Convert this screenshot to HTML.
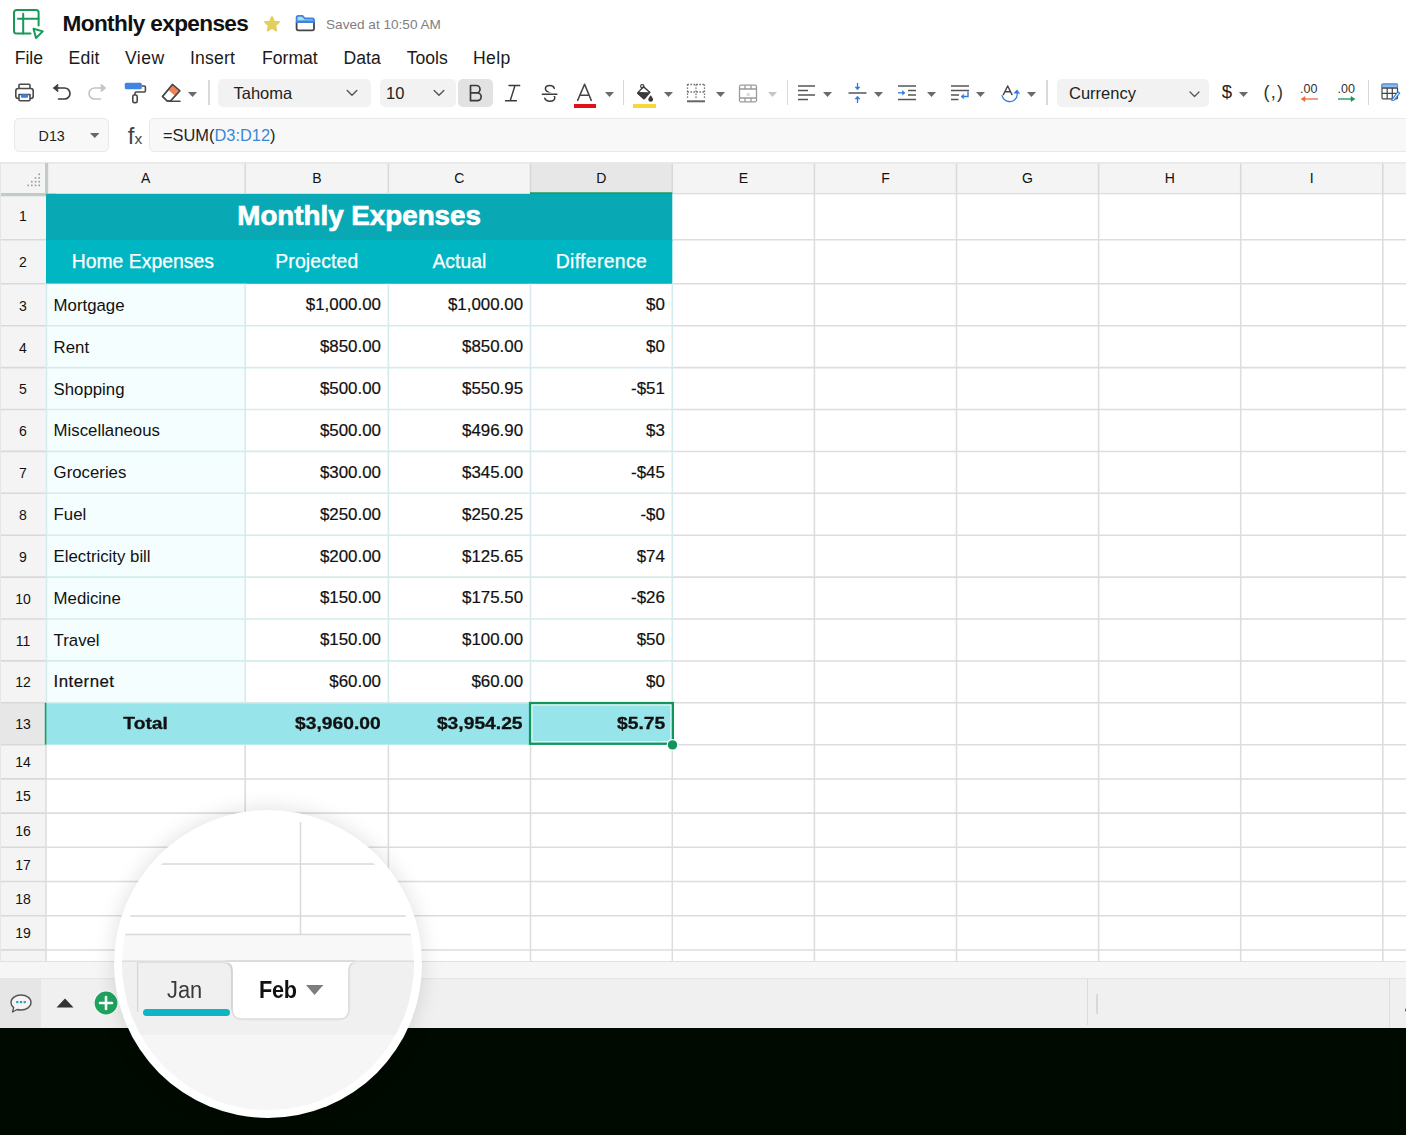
<!DOCTYPE html>
<html><head><meta charset="utf-8"><title>Monthly expenses</title>
<style>
html,body{margin:0;padding:0;}
body{width:1406px;height:1135px;overflow:hidden;background:#fff;position:relative;font-family:"Liberation Sans", sans-serif;color:#111;}
.abs{position:absolute;}
.t{position:absolute;white-space:pre;line-height:1;}
.menu{font-size:17.600px;color:#1a1a1a;top:49.800px;}
.ch{font-size:14px;color:#111;top:170.800px;text-align:center;}
.rh{font-size:14px;color:#111;left:0;width:46px;text-align:center;}
.cell{font-size:16px;color:#111;}
.num{text-align:right;}
</style></head><body>

<svg class="abs" style="left:12px;top:7px" width="34" height="34" viewBox="0 0 34 34" fill="none" stroke="#179a58" stroke-width="2" stroke-linecap="round" stroke-linejoin="round">
<path d="M18.500 26.600H4.500a2.500 2.500 0 0 1-2.500-2.500V5.400a2.500 2.500 0 0 1 2.500-2.500h19.600a2.500 2.500 0 0 1 2.500 2.500V18.500"/>
<path d="M6 11.700H26.400M11.200 6.800V26.500"/>
<path d="M21.500 21.700l9.300 2.700-6.800 6.600z"/>
</svg>
<div class="t" style="left:62.600px;top:13px;font-size:22.600px;font-weight:bold;letter-spacing:-0.640px;color:#111">Monthly expenses</div>
<svg class="abs" style="left:263px;top:14.500px" width="18" height="18" viewBox="0 0 18 18"><path d="M9 1.600l2.200 4.800 5.200 0.600-3.900 3.600 1.100 5.200L9 13.200l-4.600 2.600 1.100-5.200L1.600 7l5.200-0.600z" fill="#e2cf5e" stroke="#e2cf5e" stroke-width="1.400" stroke-linejoin="round"/></svg>
<svg class="abs" style="left:295px;top:14px" width="21" height="18" viewBox="0 0 21 18" fill="none" stroke-linejoin="round"><path d="M1.600 8v6.600a1.800 1.800 0 0 0 1.800 1.800h13.800a1.800 1.800 0 0 0 1.800-1.800V8" stroke="#444" stroke-width="1.800"/><path d="M1.600 8V3.400a1.600 1.600 0 0 1 1.600-1.600h4.300l2.300 2.700h7.600a1.600 1.600 0 0 1 1.600 1.600V8z" fill="#a8e0e2" stroke="#3f84e0" stroke-width="1.800"/><path d="M1.600 7.300h18" stroke="#3f84e0" stroke-width="1.800"/></svg>
<div class="t" style="left:326px;top:18px;font-size:13.600px;color:#808080;letter-spacing:0">Saved at 10:50 AM</div>
<div class="t menu" style="left:14.7px;letter-spacing:0px">File</div>
<div class="t menu" style="left:68.4px;letter-spacing:0.25px">Edit</div>
<div class="t menu" style="left:125px;letter-spacing:0.45px">View</div>
<div class="t menu" style="left:190px;letter-spacing:0.2px">Insert</div>
<div class="t menu" style="left:262px;letter-spacing:0px">Format</div>
<div class="t menu" style="left:343.4px;letter-spacing:0.1px">Data</div>
<div class="t menu" style="left:406.7px;letter-spacing:0px">Tools</div>
<div class="t menu" style="left:473px;letter-spacing:0.35px">Help</div>
<svg class="abs" style="left:14px;top:82px" width="21" height="21" viewBox="0 0 21 21" fill="none" stroke="#4a4a4a" stroke-width="1.600" stroke-linejoin="round"><path d="M5 6.500V3.200a1 1 0 0 1 1-1h9a1 1 0 0 1 1 1V6.500"/><rect x="1.800" y="6.500" width="17.400" height="10" rx="2.500"/><path d="M5 12.500h11v5.300a1 1 0 0 1-1 1H6a1 1 0 0 1-1-1z" fill="#fff"/><rect x="7" y="12.300" width="7" height="3.400" rx="0.800" fill="#3b7de0" stroke="none"/></svg>
<svg class="abs" style="left:51px;top:83px" width="21" height="19" viewBox="0 0 21 19" fill="none" stroke="#3c3c3c" stroke-width="1.600" stroke-linecap="round" stroke-linejoin="round"><path d="M3 5h10.500a5.500 5.500 0 0 1 0 11H7.500"/><path d="M6.500 1.500L2.500 5l4 3.500z" fill="#3c3c3c" stroke-width="1"/></svg>
<svg class="abs" style="left:87px;top:83px" width="21" height="19" viewBox="0 0 21 19" fill="none" stroke="#c4c4c4" stroke-width="1.600" stroke-linecap="round" stroke-linejoin="round"><path d="M18 5H7.500a5.500 5.500 0 0 0 0 11H13.500"/><path d="M14.500 1.500L18.500 5l-4 3.500z" fill="#c4c4c4" stroke-width="1"/></svg>
<svg class="abs" style="left:124px;top:82px" width="23" height="22" viewBox="0 0 23 22" fill="none" stroke="#4a4a4a" stroke-width="1.600" stroke-linejoin="round"><rect x="0.800" y="0.800" width="17" height="6.400" rx="1.500" fill="#3f84e3" stroke="none"/><path d="M17.800 4h2.400a1.200 1.200 0 0 1 1.200 1.200v3.600a1.200 1.200 0 0 1-1.200 1.200H12.200a1.200 1.200 0 0 0-1.200 1.200V13"/><rect x="8.800" y="13" width="4.400" height="7.600" rx="1.400"/></svg>
<svg class="abs" style="left:161px;top:83px" width="21" height="20" viewBox="0 0 21 20" fill="none" stroke="#4a4a4a" stroke-width="1.500" stroke-linejoin="round" stroke-linecap="round"><path d="M11.500 1.500l7.300 6.200-9.300 10.300H6.200L1.500 13.500z" fill="#fff"/><path d="M11.500 1.500l7.300 6.200-4.700 5.200-7.200-6.300z" fill="#ee8259" stroke="none"/><path d="M11.500 1.500l7.300 6.200-9.300 10.300H6.200L1.500 13.500z"/><path d="M9 18.200h10"/></svg>
<svg class="abs" style="left:188px;top:91.5px" width="9" height="5" viewBox="0 0 9 5"><path d="M0 0h9l-4.5 5z" fill="#6a6a6a"/></svg>
<div class="abs" style="left:208px;top:80px;width:1.500px;height:25px;background:#d9d9d9"></div>
<div class="abs" style="left:218px;top:78.800px;width:152.500px;height:28px;background:#f2f2f2;border-radius:5px"></div>
<div class="t" style="left:233.500px;top:84.500px;font-size:16.500px;color:#222">Tahoma</div>
<svg class="abs" style="left:345.5px;top:89px" width="12" height="8" viewBox="0 0 12 8" fill="none" stroke="#555" stroke-width="1.400" stroke-linecap="round" stroke-linejoin="round"><path d="M1.200 1.500l4.800 4.800 4.800-4.800"/></svg>
<div class="abs" style="left:379.500px;top:78.800px;width:76px;height:28px;background:#f2f2f2;border-radius:5px"></div>
<div class="t" style="left:386px;top:84.500px;font-size:16.500px;color:#222">10</div>
<svg class="abs" style="left:432.5px;top:89px" width="12" height="8" viewBox="0 0 12 8" fill="none" stroke="#555" stroke-width="1.400" stroke-linecap="round" stroke-linejoin="round"><path d="M1.200 1.500l4.800 4.800 4.800-4.800"/></svg>
<div class="abs" style="left:458px;top:78.800px;width:35px;height:28px;background:#e2e2e2;border-radius:5px"></div>
<svg class="abs" style="left:468px;top:84px" width="16" height="18" viewBox="0 0 16 18" fill="none" stroke="#3a3a3a" stroke-width="1.700" stroke-linejoin="round"><path d="M2.500 1.500h5.800a3.700 3.700 0 0 1 0 7.400H2.500zM2.500 8.900h6.800a3.900 3.900 0 0 1 0 7.800H2.500z"/></svg>
<svg class="abs" style="left:503px;top:83px" width="20" height="20" viewBox="503 83 20 20" fill="none" stroke="#3a3a3a" stroke-width="1.400" stroke-linecap="round"><path d="M509 85.500H519.700M505.500 100.700H516.400M515 85.500L510.200 100.700"/></svg>
<svg class="abs" style="left:540px;top:83px" width="20" height="20" viewBox="540 83 20 20" fill="none" stroke="#3a3a3a" stroke-width="1.500" stroke-linecap="round"><path d="M554.300 88.300C553.600 86.500 552 85.600 549.800 85.600C547.200 85.600 545.400 86.900 545.400 88.800C545.400 91 547.500 92 549.900 93C552.500 94 554.800 95.300 554.800 97.800C554.800 100 552.800 101.200 549.900 101.200C547.300 101.200 545.400 100.200 544.800 98.300"/><path d="M542.300 94.300h14.600" stroke="#fff" stroke-width="3.500" stroke-linecap="butt"/><path d="M542.300 94.300h14.600"/></svg>
<svg class="abs" style="left:575px;top:82px" width="20" height="20" viewBox="575 82 20 20" fill="none" stroke="#444" stroke-width="1.600" stroke-linecap="round" stroke-linejoin="round"><path d="M577.700 100.300L584.600 84.300L591.200 100.300M579.900 95.300H589.100"/></svg>
<div class="abs" style="left:573.800px;top:104px;width:22.700px;height:3.800px;background:#e0111b"></div>
<svg class="abs" style="left:604.5px;top:91.5px" width="9" height="5" viewBox="0 0 9 5"><path d="M0 0h9l-4.5 5z" fill="#6a6a6a"/></svg>
<div class="abs" style="left:622.8px;top:80px;width:1.500px;height:25px;background:#d9d9d9"></div>
<svg class="abs" style="left:634px;top:82px" width="22" height="22" viewBox="634 82 22 22"><path d="M643.500 85.800L650.800 92.200L645 99.100a1.200 1.200 0 0 1-1.700 0.100L637.400 93.900a1.200 1.200 0 0 1-0.100-1.700z" fill="#3a3a3a"/><path d="M643.600 87.700L648.700 92.200L639.300 91.900z" fill="#fff"/><circle cx="642.300" cy="86.300" r="1.700" fill="none" stroke="#3a3a3a" stroke-width="1.100"/><path d="M650.700 95.300c1.400 1.900 2.400 3.100 2.400 4.100a2.400 2.400 0 0 1-4.800 0c0-1 1-2.200 2.400-4.100z" fill="#3a3a3a"/></svg>
<div class="abs" style="left:633.200px;top:104px;width:22.800px;height:3.800px;background:#f7d838"></div>
<svg class="abs" style="left:664px;top:91.5px" width="9" height="5" viewBox="0 0 9 5"><path d="M0 0h9l-4.5 5z" fill="#6a6a6a"/></svg>
<svg class="abs" style="left:686px;top:83px" width="20" height="20" viewBox="0 0 20 20" fill="none" stroke="#555" stroke-width="1.300"><path d="M1.500 1.500h17M1.500 9h17M1.500 1.500v15M10 1.500v15M18.500 1.500v15" stroke-dasharray="1.300 1.700"/><path d="M1 18.300h18" stroke-width="2" stroke="#666"/></svg>
<svg class="abs" style="left:716px;top:91.5px" width="9" height="5" viewBox="0 0 9 5"><path d="M0 0h9l-4.5 5z" fill="#6a6a6a"/></svg>
<svg class="abs" style="left:738px;top:83.500px" width="20" height="19" viewBox="0 0 20 19" fill="none" stroke="#9a9a9a" stroke-width="1.300"><rect x="1.500" y="1.200" width="17" height="16.600" rx="1.500"/><path d="M1.500 5h17M1.500 14h17M7 1.200v3.800M13 1.200v3.800M7 14v3.800M13 14v3.800"/><text x="10" y="12" font-size="6" font-family="Liberation Sans" fill="#9cc" stroke="none" text-anchor="middle">a</text></svg>
<svg class="abs" style="left:768px;top:91.5px" width="9" height="5" viewBox="0 0 9 5"><path d="M0 0h9l-4.5 5z" fill="#c6c6c6"/></svg>
<div class="abs" style="left:786.5px;top:80px;width:1.500px;height:25px;background:#d9d9d9"></div>
<svg class="abs" style="left:797px;top:84px" width="19" height="18" viewBox="0 0 19 18" fill="none" stroke="#555" stroke-width="1.500"><path d="M1 2h17M1 6.500h10M1 11h17M1 15.500h10"/></svg>
<svg class="abs" style="left:822.5px;top:91.5px" width="9" height="5" viewBox="0 0 9 5"><path d="M0 0h9l-4.5 5z" fill="#6a6a6a"/></svg>
<svg class="abs" style="left:848px;top:82px" width="19" height="22" viewBox="0 0 19 22" fill="none" stroke="#555" stroke-width="1.500"><path d="M0.500 11h18"/><g stroke="#2f7be0" fill="#2f7be0" stroke-width="1.300"><path d="M9.500 1v5"/><path d="M7 5l2.500 3 2.500-3z" stroke-width="0.500"/><path d="M9.500 21v-5"/><path d="M7 17l2.500-3 2.500 3z" stroke-width="0.500"/></g></svg>
<svg class="abs" style="left:873.5px;top:91.5px" width="9" height="5" viewBox="0 0 9 5"><path d="M0 0h9l-4.5 5z" fill="#6a6a6a"/></svg>
<svg class="abs" style="left:897px;top:84px" width="20" height="18" viewBox="0 0 20 18" fill="none" stroke="#555" stroke-width="1.500"><path d="M1 2h18M11 6.500h8M11 11h8M1 15.500h18"/><g stroke="#2f7be0" stroke-width="1.300"><path d="M1 8.800h6.500"/><path d="M5.500 6.500l2.500 2.300-2.500 2.300z" fill="#2f7be0" stroke-width="0.500"/></g></svg>
<svg class="abs" style="left:926.5px;top:91.5px" width="9" height="5" viewBox="0 0 9 5"><path d="M0 0h9l-4.5 5z" fill="#6a6a6a"/></svg>
<svg class="abs" style="left:950px;top:84px" width="20" height="18" viewBox="0 0 20 18" fill="none" stroke="#555" stroke-width="1.500"><path d="M1 2h18M1 6.500h18M1 11h8M1 15.500h7.500"/><g stroke="#2f7be0" stroke-width="1.400" stroke-linecap="round"><path d="M18 8v4.500H12"/><path d="M13.500 10.200L11 12.500l2.500 2.300z" fill="#2f7be0" stroke-width="0.500"/></g></svg>
<svg class="abs" style="left:976px;top:91.5px" width="9" height="5" viewBox="0 0 9 5"><path d="M0 0h9l-4.5 5z" fill="#6a6a6a"/></svg>
<svg class="abs" style="left:1000px;top:82px" width="20" height="16" viewBox="1000 82 20 16" fill="none" stroke="#444" stroke-width="1.400" stroke-linecap="round" stroke-linejoin="round"><path d="M1003.400 94.600L1007.700 86L1012 94.600M1004.800 91.800H1010.600"/></svg>
<svg class="abs" style="left:1000px;top:84px" width="22" height="20" viewBox="0 0 22 20" fill="none" stroke="#2f7be0" stroke-width="1.200" stroke-linecap="round"><path d="M2 11.500c1.500 5.500 8 8 12.500 4.500 2.500-2 3-5 2.500-7.500"/><path d="M14 9l3-3.200 2.500 3.500z" fill="#2f7be0" stroke-width="0.500"/></svg>
<svg class="abs" style="left:1026.5px;top:91.5px" width="9" height="5" viewBox="0 0 9 5"><path d="M0 0h9l-4.5 5z" fill="#6a6a6a"/></svg>
<div class="abs" style="left:1046px;top:80px;width:1.500px;height:25px;background:#d9d9d9"></div>
<div class="abs" style="left:1057px;top:78.800px;width:151.700px;height:28px;background:#f2f2f2;border-radius:5px"></div>
<div class="t" style="left:1069px;top:84.500px;font-size:16.500px;color:#222">Currency</div>
<svg class="abs" style="left:1188.500px;top:90.500px" width="11" height="7" viewBox="0 0 11 7" fill="none" stroke="#555" stroke-width="1.300" stroke-linecap="round" stroke-linejoin="round"><path d="M1 1l4.500 4.500 4.500-4.500"/></svg>
<div class="t" style="left:1221.800px;top:83.200px;font-size:18.500px;color:#222">$</div>
<svg class="abs" style="left:1239px;top:91.5px" width="9" height="5" viewBox="0 0 9 5"><path d="M0 0h9l-4.5 5z" fill="#6a6a6a"/></svg>
<div class="t" style="left:1263.500px;top:83.200px;font-size:18px;color:#333;letter-spacing:1.200px">(,)</div>
<div class="t" style="left:1300px;top:83.200px;font-size:12.500px;color:#333">.00</div>
<svg class="abs" style="left:1300px;top:95px" width="19" height="8" viewBox="0 0 19 8" fill="none" stroke="#ee6a3f" stroke-width="1.300"><path d="M3 4h15"/><path d="M5 1.500L1 4l4 2.500z" fill="#ee6a3f" stroke-width="0.500"/></svg>
<div class="t" style="left:1337.500px;top:83.200px;font-size:12.500px;color:#333">.00</div>
<svg class="abs" style="left:1337px;top:95px" width="19" height="8" viewBox="0 0 19 8" fill="none" stroke="#12964f" stroke-width="1.300"><path d="M1 4h15"/><path d="M14 1.500L18 4l-4 2.500z" fill="#12964f" stroke-width="0.500"/></svg>
<div class="abs" style="left:1367.6px;top:80px;width:1.500px;height:25px;background:#d9d9d9"></div>
<svg class="abs" style="left:1381px;top:83px" width="20" height="19" viewBox="0 0 20 19" fill="none" stroke="#444" stroke-width="1.200"><rect x="1" y="1.200" width="15.500" height="14.600" rx="1"/><rect x="1" y="1.200" width="15.500" height="3.400" fill="#8cb9f0" stroke="#5a97e6" stroke-width="1"/><path d="M1 5.200h15.500M1 10.400h15.500M6.200 5.200v10.600M11.300 5.200v10.600"/><path d="M10.500 17.200l6.500-8.500 1.700 1.300-6 7.500z" fill="#fff" stroke="#2f7be0" stroke-width="1.100"/></svg>
<div class="abs" style="left:13.500px;top:118.300px;width:95.300px;height:33.700px;border:1px solid #e9e9e9;border-radius:5px;background:#f8f8f8;box-sizing:border-box"></div>
<div class="t" style="left:38.600px;top:128.800px;font-size:14.300px;color:#222">D13</div>
<svg class="abs" style="left:89.5px;top:133px" width="9.5" height="5" viewBox="0 0 9.5 5"><path d="M0 0h9.5l-4.75 5z" fill="#666"/></svg>
<div class="t" style="left:127.700px;top:124.100px;font-size:24px;color:#444">f</div>
<div class="t" style="left:134.500px;top:131.300px;font-size:15.500px;color:#444">x</div>
<div class="abs" style="left:149px;top:118.300px;width:1270px;height:33.700px;border:1px solid #e9e9e9;border-radius:5px;background:#f8f8f8;box-sizing:border-box"></div>
<div class="t" style="left:163px;top:126.500px;font-size:16.400px;color:#222">=SUM(<span style="color:#3b86d8">D3:D12</span>)</div>
<svg class="abs" style="left:0;top:0" width="1406" height="1135" viewBox="0 0 1406 1135"><rect x="0" y="162.800" width="1406" height="31" fill="#f4f4f4"/><rect x="0" y="162.800" width="46" height="798.7" fill="#f4f4f4"/><rect x="530.5" y="163.500" width="141.79999999999995" height="30" fill="#e7e7e7"/><rect x="0" y="702.8" width="45" height="41.90000000000009" fill="#e7e7e7"/><rect x="46" y="193.8" width="626.3" height="47.89999999999998" fill="#09a8b5"/><rect x="46" y="239.7" width="626.3" height="44.10000000000002" fill="#00b6c3"/><rect x="46" y="283.8" width="199.2" height="418.99999999999994" fill="#f5feff"/><rect x="46" y="702.8" width="626.3" height="41.90000000000009" fill="#97e5eb"/><path d="M0 162.800H1406" stroke="#e2e2e2" stroke-width="1.200"/><path d="M0 239.7H46 M0 283.8H46 M0 325.7H46 M0 367.6H46 M0 409.5H46 M0 451.4H46 M0 493.3H46 M0 535.2H46 M0 577.1H46 M0 619.0H46 M0 660.9H46 M0 702.8H46 M0 744.7H46 M0 778.9H46 M0 813.1H46 M0 847.3H46 M0 881.5H46 M0 915.7H46 M0 949.9H46 M245.2 163.500V193.500 M388.4 163.500V193.500 M530.5 163.500V193.500 M672.3 163.500V193.500 M814.4 163.500V193.500 M956.5 163.500V193.500 M1098.6 163.500V193.500 M1240.7 163.500V193.500 M1382.8 163.500V193.500" stroke="#d9d9d9" stroke-width="1.600" fill="none"/><path d="M672.9 239.7H1406 M672.9 283.8H1406 M672.9 325.7H1406 M672.9 367.6H1406 M672.9 409.5H1406 M672.9 451.4H1406 M672.9 493.3H1406 M672.9 535.2H1406 M672.9 577.1H1406 M672.9 619.0H1406 M672.9 660.9H1406 M672.9 702.8H1406 M672.9 744.7H1406 M46 778.9H1406 M46 813.1H1406 M46 847.3H1406 M46 881.5H1406 M46 915.7H1406 M46 949.9H1406 M245.2 744.7V961.5 M388.4 744.7V961.5 M530.5 744.7V961.5 M672.3 744.7V961.5 M814.4 193.8V961.5 M956.5 193.8V961.5 M1098.6 193.8V961.5 M1240.7 193.8V961.5 M1382.8 193.8V961.5 M46 744.7V961.5" stroke="#dddddd" stroke-width="1.550" fill="none"/><path d="M46 325.7H672.9 M46 367.6H672.9 M46 409.5H672.9 M46 451.4H672.9 M46 493.3H672.9 M46 535.2H672.9 M46 577.1H672.9 M46 619.0H672.9 M46 660.9H672.9 M46 702.8H672.9 M245.2 283.8V702.8 M388.4 283.8V702.8 M530.5 283.8V702.8 M672.3 283.8V702.8 M46.500 283.8V702.8" stroke="#d5ebec" stroke-width="1.600" fill="none"/><path d="M672.3 193.700H1406" stroke="#dcdcdc" stroke-width="1.200"/><path d="M46.600 163V196.200M0 194.700H48.200" stroke="#c3cbc7" stroke-width="3.200" fill="none"/><rect x="46" y="193.8" width="10" height="10" fill="#09a8b5"/><path d="M0.500 163V961.5" stroke="#e6e6e6" stroke-width="1"/><rect x="38.4" y="173.5" width="1.600" height="1.600" fill="#9a9a9a"/><rect x="34.7" y="177.2" width="1.600" height="1.600" fill="#9a9a9a"/><rect x="38.4" y="177.2" width="1.600" height="1.600" fill="#9a9a9a"/><rect x="31.0" y="180.9" width="1.600" height="1.600" fill="#9a9a9a"/><rect x="34.7" y="180.9" width="1.600" height="1.600" fill="#9a9a9a"/><rect x="38.4" y="180.9" width="1.600" height="1.600" fill="#9a9a9a"/><rect x="27.3" y="184.6" width="1.600" height="1.600" fill="#9a9a9a"/><rect x="31.0" y="184.6" width="1.600" height="1.600" fill="#9a9a9a"/><rect x="34.7" y="184.6" width="1.600" height="1.600" fill="#9a9a9a"/><rect x="38.4" y="184.6" width="1.600" height="1.600" fill="#9a9a9a"/><path d="M530.0 193.200H672.3" stroke="#1a9e5c" stroke-width="1.800"/><path d="M45.600 702.8V744.7" stroke="#1a9e5c" stroke-width="1.600"/><rect x="531.800" y="704.800" width="139.300" height="37.200" fill="none" stroke="#fff" stroke-width="1.200"/><rect x="530.050" y="703.050" width="142.800" height="40.700" fill="none" stroke="#13945a" stroke-width="2.300"/><circle cx="672.5" cy="744.9" r="5.900" fill="#fff"/><circle cx="672.5" cy="744.9" r="4.700" fill="#13945a"/></svg>
<div class="t ch" style="left:125.6px;width:40px">A</div>
<div class="t ch" style="left:296.8px;width:40px">B</div>
<div class="t ch" style="left:439.4px;width:40px">C</div>
<div class="t ch" style="left:581.4px;width:40px">D</div>
<div class="t ch" style="left:723.3px;width:40px">E</div>
<div class="t ch" style="left:865.5px;width:40px">F</div>
<div class="t ch" style="left:1007.5px;width:40px">G</div>
<div class="t ch" style="left:1149.7px;width:40px">H</div>
<div class="t ch" style="left:1291.8px;width:40px">I</div>
<div class="t rh" style="top:209.2px">1</div>
<div class="t rh" style="top:255.4px">2</div>
<div class="t rh" style="top:298.6px">3</div>
<div class="t rh" style="top:340.5px">4</div>
<div class="t rh" style="top:381.8px">5</div>
<div class="t rh" style="top:424.1px">6</div>
<div class="t rh" style="top:465.9px">7</div>
<div class="t rh" style="top:507.8px">8</div>
<div class="t rh" style="top:549.7px">9</div>
<div class="t rh" style="top:591.5px">10</div>
<div class="t rh" style="top:633.5px">11</div>
<div class="t rh" style="top:674.7px">12</div>
<div class="t rh" style="top:717.0px">13</div>
<div class="t rh" style="top:755.2px">14</div>
<div class="t rh" style="top:789.4px">15</div>
<div class="t rh" style="top:823.6px">16</div>
<div class="t rh" style="top:857.8px">17</div>
<div class="t rh" style="top:892.0px">18</div>
<div class="t rh" style="top:926.2px">19</div>
<div class="t" style="left:159.1px;width:400px;text-align:center;top:202.2px;font-size:27.750px;font-weight:bold;color:#fff;letter-spacing:0;-webkit-text-stroke:0.7px #fff">Monthly Expenses</div>
<div class="t" style="left:42.8px;width:200px;text-align:center;top:252.4px;font-size:19.400px;color:#fff;-webkit-text-stroke:0.25px #fff;letter-spacing:0px">Home Expenses</div>
<div class="t" style="left:216.8px;width:200px;text-align:center;top:252.4px;font-size:19.400px;color:#fff;-webkit-text-stroke:0.25px #fff;letter-spacing:0.12px">Projected</div>
<div class="t" style="left:359.4px;width:200px;text-align:center;top:252.4px;font-size:19.400px;color:#fff;-webkit-text-stroke:0.25px #fff;letter-spacing:0px">Actual</div>
<div class="t" style="left:501.4px;width:200px;text-align:center;top:252.4px;font-size:19.400px;color:#fff;-webkit-text-stroke:0.25px #fff;letter-spacing:0.35px">Difference</div>
<div class="t cell" style="left:53.600px;top:297.8px;font-size:16.800px">Mortgage</div>
<div class="t cell num" style="left:245.2px;width:135.8px;top:297.1px;font-size:16.900px;-webkit-text-stroke:0.2px #111">$1,000.00</div>
<div class="t cell num" style="left:388.4px;width:134.7px;top:297.1px;font-size:16.900px;-webkit-text-stroke:0.2px #111">$1,000.00</div>
<div class="t cell num" style="left:530.5px;width:134.4px;top:297.1px;font-size:16.900px;-webkit-text-stroke:0.2px #111">$0</div>
<div class="t cell" style="left:53.600px;top:339.6px;font-size:16.800px">Rent</div>
<div class="t cell num" style="left:245.2px;width:135.8px;top:339.0px;font-size:16.900px;-webkit-text-stroke:0.2px #111">$850.00</div>
<div class="t cell num" style="left:388.4px;width:134.7px;top:339.0px;font-size:16.900px;-webkit-text-stroke:0.2px #111">$850.00</div>
<div class="t cell num" style="left:530.5px;width:134.4px;top:339.0px;font-size:16.900px;-webkit-text-stroke:0.2px #111">$0</div>
<div class="t cell" style="left:53.600px;top:381.6px;font-size:16.800px">Shopping</div>
<div class="t cell num" style="left:245.2px;width:135.8px;top:380.9px;font-size:16.900px;-webkit-text-stroke:0.2px #111">$500.00</div>
<div class="t cell num" style="left:388.4px;width:134.7px;top:380.9px;font-size:16.900px;-webkit-text-stroke:0.2px #111">$550.95</div>
<div class="t cell num" style="left:530.5px;width:134.4px;top:380.9px;font-size:16.900px;-webkit-text-stroke:0.2px #111">-$51</div>
<div class="t cell" style="left:53.600px;top:423.4px;font-size:16.800px">Miscellaneous</div>
<div class="t cell num" style="left:245.2px;width:135.8px;top:422.8px;font-size:16.900px;-webkit-text-stroke:0.2px #111">$500.00</div>
<div class="t cell num" style="left:388.4px;width:134.7px;top:422.8px;font-size:16.900px;-webkit-text-stroke:0.2px #111">$496.90</div>
<div class="t cell num" style="left:530.5px;width:134.4px;top:422.8px;font-size:16.900px;-webkit-text-stroke:0.2px #111">$3</div>
<div class="t cell" style="left:53.600px;top:465.4px;font-size:16.800px">Groceries</div>
<div class="t cell num" style="left:245.2px;width:135.8px;top:464.7px;font-size:16.900px;-webkit-text-stroke:0.2px #111">$300.00</div>
<div class="t cell num" style="left:388.4px;width:134.7px;top:464.7px;font-size:16.900px;-webkit-text-stroke:0.2px #111">$345.00</div>
<div class="t cell num" style="left:530.5px;width:134.4px;top:464.7px;font-size:16.900px;-webkit-text-stroke:0.2px #111">-$45</div>
<div class="t cell" style="left:53.600px;top:507.2px;font-size:16.800px">Fuel</div>
<div class="t cell num" style="left:245.2px;width:135.8px;top:506.6px;font-size:16.900px;-webkit-text-stroke:0.2px #111">$250.00</div>
<div class="t cell num" style="left:388.4px;width:134.7px;top:506.6px;font-size:16.900px;-webkit-text-stroke:0.2px #111">$250.25</div>
<div class="t cell num" style="left:530.5px;width:134.4px;top:506.6px;font-size:16.900px;-webkit-text-stroke:0.2px #111">-$0</div>
<div class="t cell" style="left:53.600px;top:549.2px;font-size:16.800px">Electricity bill</div>
<div class="t cell num" style="left:245.2px;width:135.8px;top:548.5px;font-size:16.900px;-webkit-text-stroke:0.2px #111">$200.00</div>
<div class="t cell num" style="left:388.4px;width:134.7px;top:548.5px;font-size:16.900px;-webkit-text-stroke:0.2px #111">$125.65</div>
<div class="t cell num" style="left:530.5px;width:134.4px;top:548.5px;font-size:16.900px;-webkit-text-stroke:0.2px #111">$74</div>
<div class="t cell" style="left:53.600px;top:591.0px;font-size:16.800px">Medicine</div>
<div class="t cell num" style="left:245.2px;width:135.8px;top:590.4px;font-size:16.900px;-webkit-text-stroke:0.2px #111">$150.00</div>
<div class="t cell num" style="left:388.4px;width:134.7px;top:590.4px;font-size:16.900px;-webkit-text-stroke:0.2px #111">$175.50</div>
<div class="t cell num" style="left:530.5px;width:134.4px;top:590.4px;font-size:16.900px;-webkit-text-stroke:0.2px #111">-$26</div>
<div class="t cell" style="left:53.600px;top:633.0px;font-size:16.800px">Travel</div>
<div class="t cell num" style="left:245.2px;width:135.8px;top:632.3px;font-size:16.900px;-webkit-text-stroke:0.2px #111">$150.00</div>
<div class="t cell num" style="left:388.4px;width:134.7px;top:632.3px;font-size:16.900px;-webkit-text-stroke:0.2px #111">$100.00</div>
<div class="t cell num" style="left:530.5px;width:134.4px;top:632.3px;font-size:16.900px;-webkit-text-stroke:0.2px #111">$50</div>
<div class="t cell" style="left:53.600px;top:674.4px;font-size:16.900px;letter-spacing:0.450px;-webkit-text-stroke:0.2px #111">Internet</div>
<div class="t cell num" style="left:245.2px;width:135.8px;top:674.2px;font-size:16.900px;-webkit-text-stroke:0.2px #111">$60.00</div>
<div class="t cell num" style="left:388.4px;width:134.7px;top:674.2px;font-size:16.900px;-webkit-text-stroke:0.2px #111">$60.00</div>
<div class="t cell num" style="left:530.5px;width:134.4px;top:674.2px;font-size:16.900px;-webkit-text-stroke:0.2px #111">$0</div>
<div class="t cell" style="left:46px;width:199.2px;text-align:center;top:716.0px;font-size:16.900px;font-weight:bold;-webkit-text-stroke:0.3px #111;transform:scaleX(1.140);transform-origin:50% 50%">Total</div>
<div class="t cell num" style="left:245.2px;width:135.7px;top:716.0px;font-size:16.900px;font-weight:bold;-webkit-text-stroke:0.3px #111;transform:scaleX(1.140);transform-origin:100% 50%">$3,960.00</div>
<div class="t cell num" style="left:388.4px;width:134.6px;top:716.0px;font-size:16.900px;font-weight:bold;-webkit-text-stroke:0.3px #111;transform:scaleX(1.140);transform-origin:100% 50%">$3,954.25</div>
<div class="t cell num" style="left:530.5px;width:134.3px;top:716.0px;font-size:16.900px;font-weight:bold;-webkit-text-stroke:0.3px #111;transform:scaleX(1.140);transform-origin:100% 50%">$5.75</div>
<div class="abs" style="left:0;top:961.5px;width:1406px;height:17px;background:#f6f6f6"></div>
<div class="abs" style="left:0;top:960.8px;width:1406px;height:1.400px;background:#e0e0e0"></div>
<div class="abs" style="left:0;top:979px;width:1406px;height:49px;background:#f0f0f0"></div>
<div class="abs" style="left:0;top:978.200px;width:1406px;height:1.300px;background:#e4e4e4"></div>
<div class="abs" style="left:0;top:979px;width:40.500px;height:49px;background:#e6e6e6"></div>
<svg class="abs" style="left:8.600px;top:992.500px" width="24" height="22" viewBox="0 0 24 22" fill="none" stroke="#555" stroke-width="1.400" stroke-linejoin="round"><path d="M12 2C6.500 2 2 5.300 2 9.500c0 2 1 3.800 2.700 5.100L3.500 19l4.600-2.500c1.200 0.300 2.500 0.500 3.900 0.500 5.500 0 10-3.300 10-7.500S17.500 2 12 2z" fill="#f4f4f4"/><g fill="#2a9fb8" stroke="none"><rect x="7.200" y="8" width="2.200" height="2.200"/><rect x="10.900" y="8" width="2.200" height="2.200"/><rect x="14.600" y="8" width="2.200" height="2.200"/></g></svg>
<svg class="abs" style="left:56.200px;top:997.500px" width="18" height="10" viewBox="0 0 18 10"><path d="M9 0.500l8.500 9H0.500z" fill="#333"/></svg>
<svg class="abs" style="left:92.600px;top:989.500px" width="26" height="26" viewBox="-1 -1 26 26"><circle cx="12" cy="12" r="12.300" fill="#fbfbfb"/><circle cx="12" cy="12" r="11.400" fill="#1fa35f"/><path d="M12 6v12M6 12h12" stroke="#fff" stroke-width="2.600" stroke-linecap="round"/></svg>
<div class="abs" style="left:1086.800px;top:979px;width:1.500px;height:46px;background:#dcdcdc"></div>
<div class="abs" style="left:1095.500px;top:993.500px;width:2px;height:20px;background:#d9d9d9;border-radius:1px"></div>
<div class="abs" style="left:1388.500px;top:979px;width:1.500px;height:48px;background:#dcdcdc"></div>
<div class="abs" style="left:1404.500px;top:1007.500px;width:4px;height:4px;border-radius:2px;background:#555"></div>
<div class="abs" style="left:0;top:1028px;width:1406px;height:107px;background:#000a01"></div>
<div class="abs" style="left:114px;top:810px;width:308px;height:308px;border-radius:50%;background:#fff;box-shadow:0 0 22px rgba(0,0,0,0.13)"></div>
<div class="abs" style="left:122px;top:818px;width:292px;height:292px;border-radius:50%;overflow:hidden;background:#fff">
<div class="abs" style="left:0;top:116px;width:400px;height:30px;background:#f8f8f8"></div>
<div class="abs" style="left:0;top:143px;width:400px;height:75px;background:#f0f0f0"></div>
<div class="abs" style="left:0;top:217px;width:400px;height:120px;background:#f6f6f6"></div>
<svg class="abs" style="left:0;top:0" width="292" height="292" viewBox="122 818 292 292" fill="none" stroke="#d9d9d9" stroke-width="1.500">
<path d="M300.500 822V934.500M160 864H375M128 916H408M120 934.500H412"/>
<path d="M120 961.200H420" stroke="#dadada" stroke-width="1.300"/>
<path d="M137.600 962V1012" stroke="#d6d6d6" stroke-width="1.300"/>
<path d="M137.600 962.500H222Q231.600 962.500 231.600 972V1010" stroke="#dedede" stroke-width="1.200"/>
<path d="M224 961.800Q232.800 961.800 232.800 970V1009Q232.800 1018.500 242 1018.500H339Q348.400 1018.500 348.400 1009V970Q348.400 961.800 356.500 961.800Z" fill="#fff" stroke="none" style="filter:drop-shadow(0 0.8px 1.300px rgba(0,0,0,0.32))"/>
<path d="M226 961.200H355" stroke="#dcdcdc" stroke-width="1.300"/>
</svg>
</div>
<div class="t" style="left:167.300px;top:978.800px;font-size:23px;color:#3a3a3a;transform:scaleX(0.950);transform-origin:0 50%">Jan</div>
<div class="abs" style="left:142.600px;top:1008.500px;width:87px;height:7.200px;border-radius:3.600px;background:#0fb5c4"></div>
<div class="t" style="left:259.200px;top:978.700px;font-size:23px;font-weight:bold;color:#111;letter-spacing:-0.300px;transform:scaleX(0.940);transform-origin:0 50%">Feb</div>
<svg class="abs" style="left:305.8px;top:985.3px" width="17.2" height="10" viewBox="0 0 17.2 10"><path d="M0 0h17.2l-8.6 10z" fill="#7d7d7d"/></svg>
</body></html>
